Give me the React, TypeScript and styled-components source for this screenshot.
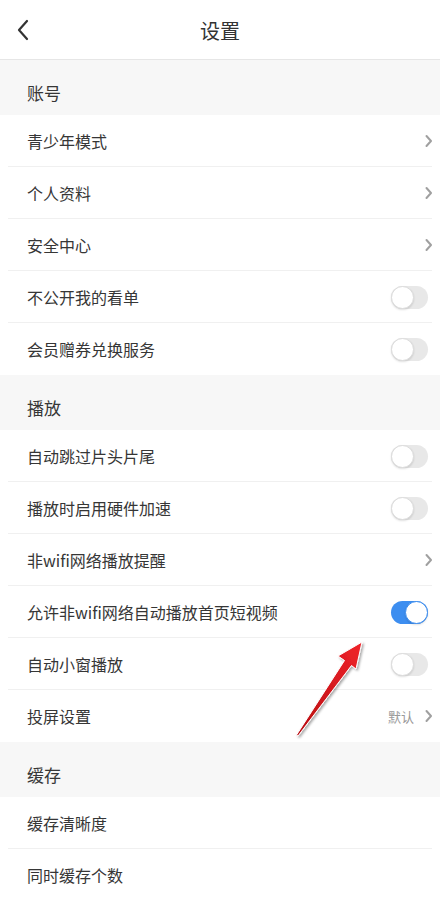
import React from 'react';
import styled, { createGlobalStyle } from 'styled-components';

const GlobalStyle = createGlobalStyle`
    html, body {
        margin: 0;
        padding: 0;
        background: #ffffff;
    }

    body {
        font-family: "Noto Sans CJK SC", "Noto Sans", sans-serif;
        color: #333333;
    }
`;

const Page = styled.div`
    position: relative;
    width: 440px;
    min-height: 904px;
    background: #ffffff;
    overflow: hidden;
`;

const Header = styled.header`
    height: 59px;
    display: grid;
    grid-template-columns: 60px 1fr 60px;
    align-items: center;
    border-bottom: 1px solid #e6e6e6;
`;

const BackButton = styled.div`
    display: flex;
    align-items: center;
    padding-left: 16px;
    padding-top: 1px;
`;

const Title = styled.h1`
    margin: 0;
    text-align: center;
    font-size: 20px;
    font-weight: 400;
    color: #333333;
    padding-top: 1px;
`;

const SectionTitle = styled.div`
    height: 55px;
    box-sizing: border-box;
    padding: 21px 27px 0;
    background: #f7f7f7;
    font-size: 17px;
    line-height: 24px;
    color: #363636;
`;

const List = styled.div`
    display: flex;
    flex-direction: column;
`;

const Row = styled.div<{ $last?: boolean }>`
    position: relative;
    height: 52px;
    display: flex;
    align-items: center;
    justify-content: space-between;
    padding: 0 7px 0 27px;

    &::after {
        content: '';
        display: ${({ $last }) => ($last ? 'none' : 'block')};
        position: absolute;
        left: 8px;
        right: 8px;
        bottom: 0;
        height: 1px;
        background: #f0f0f0;
    }
`;

const Label = styled.span`
    font-size: 16px;
    line-height: 22px;
    color: #363636;
    margin-top: -1px;
`;

const Trailing = styled.div`
    display: flex;
    align-items: center;
    gap: 10px;
`;

const Hint = styled.span`
    font-size: 13px;
    color: #999999;
`;

const Track = styled.div<{ $on?: boolean }>`
    position: relative;
    width: 37px;
    height: 23px;
    margin-right: 5px;
    border-radius: 12px;
    background: ${({ $on }) => ($on ? '#3d8ef0' : '#e8e8e8')};
`;

const Knob = styled.div<{ $on?: boolean }>`
    position: absolute;
    top: 0;
    left: ${({ $on }) => ($on ? '14px' : '0')};
    width: 23px;
    height: 23px;
    box-sizing: border-box;
    border-radius: 50%;
    background: #ffffff;
    border: 1px solid ${({ $on }) => ($on ? '#3d8ef0' : '#dcdcdc')};
    box-shadow: 0 1px 2px rgba(0, 0, 0, 0.12);
`;

const Pointer = styled.svg`
    position: absolute;
    left: 280px;
    top: 630px;
    width: 100px;
    height: 120px;
    pointer-events: none;
`;

type Kind = 'link' | 'toggle' | 'plain';

interface Item {
    label: string;
    kind: Kind;
    on?: boolean;
    hint?: string;
}

interface Section {
    title: string;
    items: Item[];
}

const sections: Section[] = [
    {
        title: '账号',
        items: [
            { label: '青少年模式', kind: 'link' },
            { label: '个人资料', kind: 'link' },
            { label: '安全中心', kind: 'link' },
            { label: '不公开我的看单', kind: 'toggle' },
            { label: '会员赠券兑换服务', kind: 'toggle' }
        ]
    },
    {
        title: '播放',
        items: [
            { label: '自动跳过片头片尾', kind: 'toggle' },
            { label: '播放时启用硬件加速', kind: 'toggle' },
            { label: '非wifi网络播放提醒', kind: 'link' },
            { label: '允许非wifi网络自动播放首页短视频', kind: 'toggle', on: true },
            { label: '自动小窗播放', kind: 'toggle' },
            { label: '投屏设置', kind: 'link', hint: '默认' }
        ]
    },
    {
        title: '缓存',
        items: [
            { label: '缓存清晰度', kind: 'plain' },
            { label: '同时缓存个数', kind: 'plain' }
        ]
    }
];

const Chevron = () => (
    <svg width="9" height="14" viewBox="0 0 9 14">
        <polyline points="2.5,2 7,7 2.5,12" fill="none" stroke="#a0a0a0" strokeWidth="2" strokeLinecap="round" strokeLinejoin="round" />
    </svg>
);

const BackIcon = () => (
    <svg width="14" height="22" viewBox="0 0 14 22">
        <polyline points="11,2 3,11 11,20" fill="none" stroke="#333333" strokeWidth="2.2" strokeLinecap="round" strokeLinejoin="round" />
    </svg>
);

const Switch: React.FC<{ on?: boolean }> = ({ on }) => (
    <Track $on={on}>
        <Knob $on={on} />
    </Track>
);

const SettingRow: React.FC<{ item: Item; last: boolean }> = ({ item, last }) => (
    <Row $last={last}>
        <Label>{item.label}</Label>
        <Trailing>
            {item.hint && <Hint>{item.hint}</Hint>}
            {item.kind === 'link' && <Chevron />}
            {item.kind === 'toggle' && <Switch on={item.on} />}
        </Trailing>
    </Row>
);

export default function App() {
    return (
        <Page>
            <GlobalStyle />
            <Header>
                <BackButton>
                    <BackIcon />
                </BackButton>
                <Title>设置</Title>
                <div />
            </Header>
            {sections.map((section) => (
                <React.Fragment key={section.title}>
                    <SectionTitle>{section.title}</SectionTitle>
                    <List>
                        {section.items.map((item, i) => (
                            <SettingRow key={item.label} item={item} last={i === section.items.length - 1} />
                        ))}
                    </List>
                </React.Fragment>
            ))}
            {/* red annotation arrow pointing at the enabled switch */}
            <Pointer viewBox="0 0 100 120">
                <defs>
                    <linearGradient id="arrowFill" x1="0" y1="1" x2="1" y2="0">
                        <stop offset="0" stopColor="#b80d12" />
                        <stop offset="1" stopColor="#f0242a" />
                    </linearGradient>
                    <filter id="arrowShadow" x="-20%" y="-20%" width="140%" height="140%">
                        <feDropShadow dx="1.5" dy="1.5" stdDeviation="1.2" floodColor="#000000" floodOpacity="0.35" />
                    </filter>
                </defs>
                <polygon
                    points="82,12 76,39 71.5,35.5 18,106 16.5,105 64.5,30.5 58,26"
                    fill="url(#arrowFill)"
                    stroke="#ffffff"
                    strokeWidth="1"
                    strokeLinejoin="round"
                    filter="url(#arrowShadow)"
                />
            </Pointer>
        </Page>
    );
}
